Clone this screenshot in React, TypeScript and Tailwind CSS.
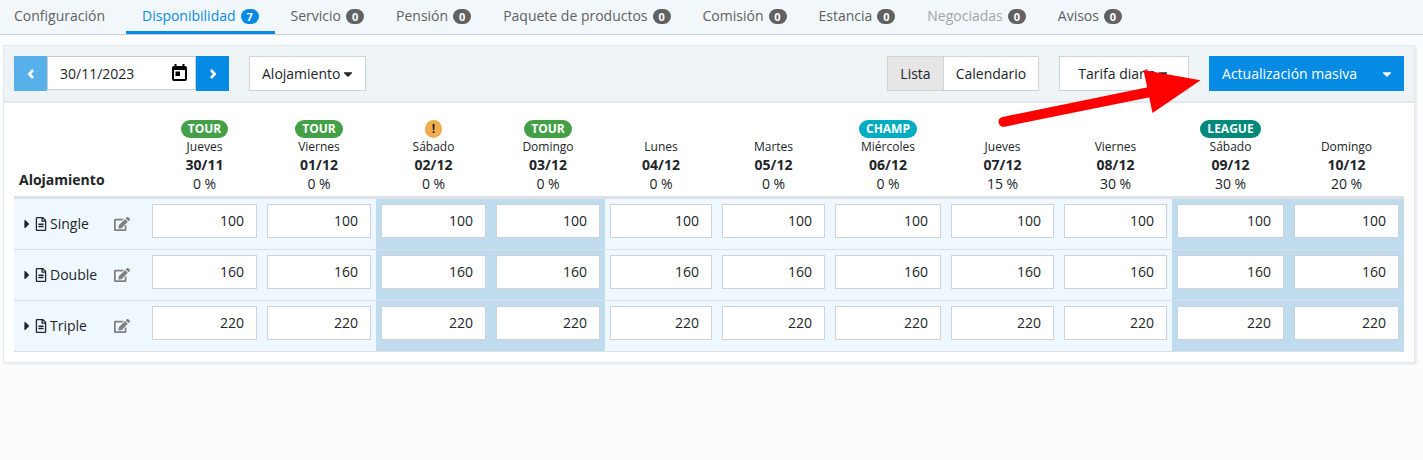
import React, { useState } from 'react';
import { FaCaretDown, FaCaretRight, FaEdit, FaRegFileAlt } from 'react-icons/fa';

interface Tab {
  label: string;
  count?: number;
  disabled?: boolean;
}

interface Day {
  name: string;
  date: string;
  percent: number;
  width: string;
  weekend?: boolean;
  badge?: { text: string; color: string };
}

const TABS: Tab[] = [
  { label: 'Configuración' },
  { label: 'Disponibilidad', count: 7 },
  { label: 'Servicio', count: 0 },
  { label: 'Pensión', count: 0 },
  { label: 'Paquete de productos', count: 0 },
  { label: 'Comisión', count: 0 },
  { label: 'Estancia', count: 0 },
  { label: 'Negociadas', count: 0, disabled: true },
  { label: 'Avisos', count: 0 },
];

const TOUR = { text: 'TOUR', color: 'bg-[#43a047] text-white' };

const DAYS: Day[] = [
  { name: 'Jueves', date: '30/11', percent: 0, width: 'w-[115px]', badge: TOUR },
  { name: 'Viernes', date: '01/12', percent: 0, width: 'w-[114px]', badge: TOUR },
  {
    name: 'Sábado', date: '02/12', percent: 0, width: 'w-[115px]', weekend: true,
    badge: { text: '!', color: 'bg-[#f0ad4e] text-[#212529]' },
  },
  { name: 'Domingo', date: '03/12', percent: 0, width: 'w-[114px]', weekend: true, badge: TOUR },
  { name: 'Lunes', date: '04/12', percent: 0, width: 'w-[112px]' },
  { name: 'Martes', date: '05/12', percent: 0, width: 'w-[113px]' },
  {
    name: 'Miércoles', date: '06/12', percent: 0, width: 'w-[116px]',
    badge: { text: 'CHAMP', color: 'bg-[#00acc1] text-white' },
  },
  { name: 'Jueves', date: '07/12', percent: 15, width: 'w-[113px]' },
  { name: 'Viernes', date: '08/12', percent: 30, width: 'w-[113px]' },
  {
    name: 'Sábado', date: '09/12', percent: 30, width: 'w-[117px]', weekend: true,
    badge: { text: 'LEAGUE', color: 'bg-[#00897b] text-white' },
  },
  { name: 'Domingo', date: '10/12', percent: 20, width: 'w-[115px]', weekend: true },
];

const ROOMS = [
  { name: 'Single', price: 100 },
  { name: 'Double', price: 160 },
  { name: 'Triple', price: 220 },
];

const TabBar = () => {
  const [active, setActive] = useState('Disponibilidad');

  return (
    <nav className="flex h-[35px] border-b border-[#c9cdd0] bg-[#f2f7fb]">
      {TABS.map(({ label, count, disabled }) => {
        const isActive = label === active;
        const color = isActive
          ? 'text-[#058be4] border-[#058be4]'
          : disabled
            ? 'text-[#a2a4a6] border-transparent'
            : 'text-[#616161] border-transparent';
        return (
          <a
            key={label}
            href="#"
            aria-disabled={disabled}
            onClick={() => !disabled && setActive(label)}
            className={`flex items-center gap-[5px] border-b-3 pr-4 whitespace-nowrap ${
              count === undefined ? 'mr-[5px] pl-[14px]' : 'pl-4'
            } ${color}`}
          >
            {label}
            {count !== undefined && (
              <span
                className={`mt-px flex h-[15px] w-[18px] items-center justify-center rounded-full text-[11px] font-bold text-white ${
                  isActive ? 'bg-[#058be4]' : 'bg-[#616161]'
                }`}
              >
                {count}
              </span>
            )}
          </a>
        );
      })}
    </nav>
  );
};

const Chevron = ({ d }: { d: string }) => (
  <svg width="8" height="10" viewBox="0 0 8 10" fill="none">
    <path d={d} stroke="currentColor" strokeWidth="2.6" />
  </svg>
);

const CalendarIcon = () => (
  <svg width="15" height="18" viewBox="0 0 15 18" fill="none">
    <path d="M2.500 0h2v2h6V0h2v2h.5a2 2 0 0 1 2 2v11a2 2 0 0 1-2 2H2a2 2 0 0 1-2-2V4a2 2 0 0 1 2-2h.5zM2 6v9h11V6z" fill="#000" fillRule="evenodd" />
    <path d="M3.500 7.500h4.500V12H3.500z" fill="#000" />
  </svg>
);

const Toolbar = () => {
  const [date, setDate] = useState('30/11/2023');
  const [view, setView] = useState('Lista');

  return (
    <div className="flex justify-between border-b-2 border-[#e1e7ea] bg-[#eef3f6] p-[10px]">
      <div className="flex gap-5">
        <div className="flex h-[35px] items-start">
          <button aria-label="Día anterior" className="flex h-full w-[33px] items-center justify-center bg-[#58b0eb] text-white">
            <Chevron d="M6 1 2.300 5 6 9" />
          </button>
          <div className="flex h-[34px] w-[149px] items-center border border-[#ccc] bg-white pr-2 pl-3">
            <input
              aria-label="Fecha"
              value={date}
              onChange={(e) => setDate(e.target.value)}
              className="w-full min-w-0 outline-none"
            />
            <button aria-label="Abrir calendario">
              <CalendarIcon />
            </button>
          </div>
          <button aria-label="Día siguiente" className="flex h-full w-[33px] items-center justify-center bg-[#058be4] text-white">
            <Chevron d="M2 1 5.700 5 2 9" />
          </button>
        </div>
        <button className="flex items-center border border-[#ced4da] bg-white pr-[10px] pl-3">
          Alojamiento
          <FaCaretDown size={14} className="ml-px" />
        </button>
      </div>

      <div className="flex gap-5">
        <div className="flex border border-[#ced4da] bg-white">
          {['Lista', 'Calendario'].map((name, i) => (
            <button
              key={name}
              onClick={() => setView(name)}
              className={`px-3 ${i > 0 ? 'border-l border-[#ced4da]' : ''} ${view === name ? 'bg-[#e6e6e6]' : ''}`}
            >
              {name}
            </button>
          ))}
        </div>
        <button className="flex items-center border border-[#ced4da] bg-white px-[18px]">
          Tarifa diaria
          <FaCaretDown size={14} />
        </button>
        <div className="flex bg-[#058be4] text-white">
          <button className="px-[13px]">Actualización masiva</button>
          <button aria-label="Más opciones" className="flex w-[34px] items-center justify-center">
            <FaCaretDown size={14} />
          </button>
        </div>
      </div>
    </div>
  );
};

const RatesTable = () => (
  <table className="w-full table-fixed border-collapse">
    <colgroup>
      <col className="w-[133px]" />
      {DAYS.map((day) => (
        <col key={day.date} className={day.width} />
      ))}
    </colgroup>
    <thead>
      <tr className="border-b-3 border-[#dee2e6]">
        <th className="px-[5px] pb-[6px] text-left align-bottom font-bold">Alojamiento</th>
        {DAYS.map(({ name, date, percent, badge }) => (
          <th key={date} className="pt-[17px] pb-[3px] align-bottom font-normal">
            {badge && (
              <span className={`mx-auto block h-[18px] w-fit rounded-full px-[7px] text-[12px] leading-[17px] font-bold ${badge.color}`}>
                {badge.text}
              </span>
            )}
            <span className="block text-[12px] leading-[18px]">{name}</span>
            <span className="block leading-[18px] font-bold">{date}</span>
            <span className="block leading-[19px]">{percent} %</span>
          </th>
        ))}
      </tr>
    </thead>
    <tbody>
      {ROOMS.map((room) => (
        <tr key={room.name} className="border-b border-[#dcdfe2] bg-[#f0f8ff]">
          <th className="pr-[17px] pb-px pl-[6px] text-left font-normal">
            <div className="flex items-center">
              <button aria-label={`Desplegar ${room.name}`}>
                <FaCaretRight size={14} />
              </button>
              <FaRegFileAlt size={14} className="mr-[2px]" />
              {room.name}
              <button aria-label={`Editar ${room.name}`} className="ml-auto text-[#808080]">
                <FaEdit size={16} />
              </button>
            </div>
          </th>
          {DAYS.map((day) => (
            <td key={day.date} className={`px-[5px] pt-[5px] pb-[11px] ${day.weekend ? 'bg-[#bfdcee]' : ''}`}>
              <input
                aria-label={`${room.name} ${day.date}`}
                defaultValue={room.price}
                className="block h-[34px] w-full border border-[#ccd2dc] bg-white px-3 pb-[2px] text-right outline-none"
              />
            </td>
          ))}
        </tr>
      ))}
    </tbody>
  </table>
);

const PointerArrow = () => (
  <svg
    className="pointer-events-none absolute top-[20px] right-[213px]"
    width="206"
    height="65"
    viewBox="0 0 206 65"
  >
    <path d="M8.500 55.800 L155 26" stroke="#f00" strokeWidth="10" strokeLinecap="round" />
    <path d="M148.500 4 L205.500 14.200 L157.500 47 Z" fill="#f00" />
  </svg>
);

export default function App() {
  return (
    <div className="min-h-screen bg-[#fbfcfe] font-['Open_Sans','Noto_Sans',sans-serif] text-[14px] leading-[21px] text-[#212529]">
      <TabBar />
      <main className="pt-[10px] pr-2 pl-[3px]">
        <section className="relative border border-[#e1e7ea] bg-white shadow-[2px_2px_2px_rgba(0,0,0,0.06)]">
          <Toolbar />
          <div className="px-[10px] pb-[10px]">
            <RatesTable />
          </div>
          <PointerArrow />
        </section>
      </main>
    </div>
  );
}
